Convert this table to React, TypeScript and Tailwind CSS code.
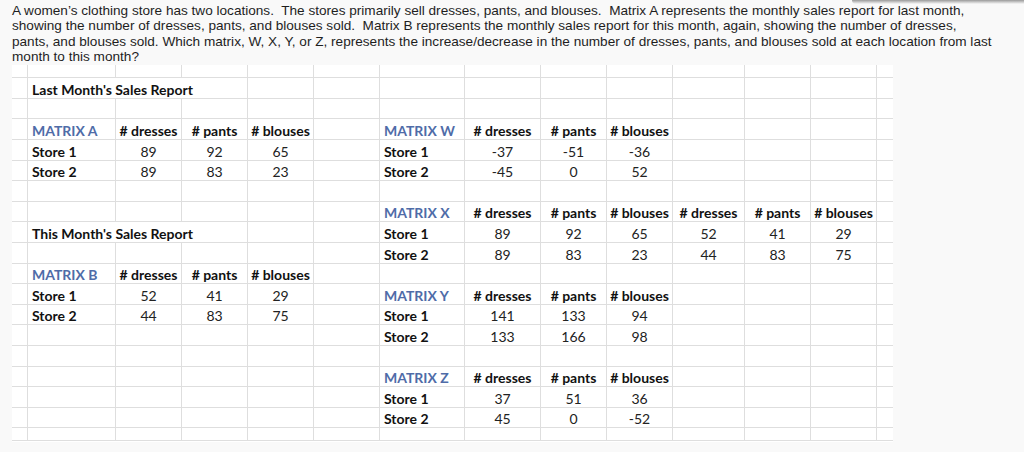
import React from 'react';

type Cell = [number, string, string];

const LINES = [
  'A women\u2019s clothing store has two locations.  The stores primarily sell dresses, pants, and blouses.  Matrix A represents the monthly sales report for last month,',
  'showing the number of dresses, pants, and blouses sold.  Matrix B represents the monthly sales report for this month, again, showing the number of dresses,',
  'pants, and blouses sold. Which matrix, W, X, Y, or Z, represents the increase/decrease in the number of dresses, pants, and blouses sold at each location from last',
  'month to this month?',
];

const hdr = (col: number, n = 3): Cell[] => {
  const names = ['# dresses', '# pants', '# blouses'];
  const out: Cell[] = [];
  for (let i = 0; i < n; i++) out.push([col + i, 'H', names[i % 3]]);
  return out;
};

const nums = (col: number, vals: string[]): Cell[] => vals.map((v, i) => [col + i, 'N', v] as Cell);

// rows between the two partial edge rows; columns: 0 = stub, 1 = A ... 13 = M
const ROWS: Cell[][] = [
  [[1, 'T', "Last Month's Sales Report"]],
  [],
  [[1, 'M', 'MATRIX A'], ...hdr(2), [6, 'M', 'MATRIX W'], ...hdr(7)],
  [[1, 'L', 'Store 1'], ...nums(2, ['89', '92', '65']), [6, 'L', 'Store 1'], ...nums(7, ['-37', '-51', '-36'])],
  [[1, 'L', 'Store 2'], ...nums(2, ['89', '83', '23']), [6, 'L', 'Store 2'], ...nums(7, ['-45', '0', '52'])],
  [],
  [[6, 'M', 'MATRIX X'], ...hdr(7, 6)],
  [[1, 'T', "This Month's Sales Report"], [6, 'L', 'Store 1'], ...nums(7, ['89', '92', '65', '52', '41', '29'])],
  [[6, 'L', 'Store 2'], ...nums(7, ['89', '83', '23', '44', '83', '75'])],
  [[1, 'M', 'MATRIX B'], ...hdr(2)],
  [[1, 'L', 'Store 1'], ...nums(2, ['52', '41', '29']), [6, 'M', 'MATRIX Y'], ...hdr(7)],
  [[1, 'L', 'Store 2'], ...nums(2, ['44', '83', '75']), [6, 'L', 'Store 1'], ...nums(7, ['141', '133', '94'])],
  [[6, 'L', 'Store 2'], ...nums(7, ['133', '166', '98'])],
  [],
  [[6, 'M', 'MATRIX Z'], ...hdr(7)],
  [[6, 'L', 'Store 1'], ...nums(7, ['37', '51', '36'])],
  [[6, 'L', 'Store 2'], ...nums(7, ['45', '0', '-52'])],
];

const KIND: Record<string, string> = {
  T: 'col-span-3 justify-start pl-1 font-bold text-[#111]',
  M: 'justify-start pl-1 font-bold text-[#4f6ca8]',
  L: 'justify-start pl-1 font-bold text-[#111]',
  H: 'justify-center font-bold text-[#111]',
  N: 'justify-center text-[#222]',
};

const GRID = 'grid grid-cols-[16px_88px_66px_66px_66px_66px_85px_76px_66px_66px_72px_66px_66px_16px]';

const SheetRow: React.FC<{ cells: Cell[]; h: string }> = ({ cells, h }) => {
  const out: React.ReactNode[] = [];
  for (let c = 0; c < 14; c++) {
    const cell = cells.find((x) => x[0] === c);
    const edge = c === 13 ? 'border-b' : 'border-r border-b';
    if (cell) {
      out.push(
        <div key={c} className={`flex items-end pb-[1px] whitespace-nowrap leading-none border-[#dedede] ${edge} ${KIND[cell[1]]}`}>
          {cell[2]}
        </div>
      );
      if (cell[1] === 'T') c += 2;
    } else {
      out.push(<div key={c} className={`border-[#dedede] ${edge}`} />);
    }
  }
  return <div className={`${GRID} ${h}`}>{out}</div>;
};

const App: React.FC = () => {
  return (
    <div className="relative w-[1024px] h-[452px] overflow-hidden bg-[#f9f9f9]">
      {/* shadow of a panel above the page */}
      <div className="absolute top-0 right-0 w-[172px] h-[4px] rounded-bl-sm bg-gradient-to-b from-[#9a9a9a] to-transparent" />

      <div className="px-3 pt-[3px] font-['Liberation_Sans',Arial,sans-serif] text-[13.6px] leading-[15.3px] text-[#1e1e1e]">
        {LINES.map((l) => (
          <div key={l} className="whitespace-pre">{l}</div>
        ))}
      </div>

      <div className="ml-3 mt-[1px] w-[881px] h-[377px] overflow-hidden bg-white font-['Lato','Open_Sans',sans-serif] text-[14px]">
        <SheetRow cells={[]} h="h-[13px]" />
        {ROWS.map((r, i) => (
          <SheetRow key={i} cells={r} h="h-[20.6px]" />
        ))}
        <SheetRow cells={[]} h="h-[13px]" />
      </div>
    </div>
  );
};

export default App;
